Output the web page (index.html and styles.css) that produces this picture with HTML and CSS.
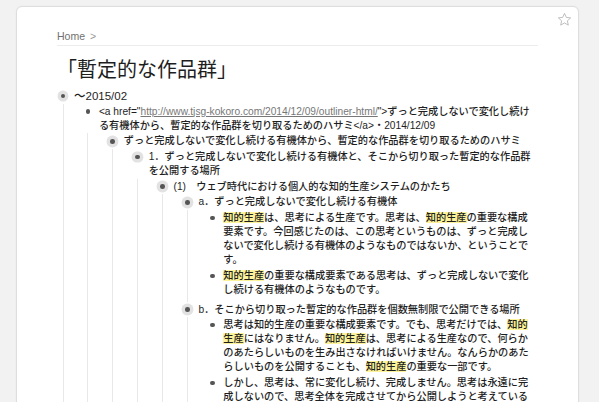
FILE: index.html
```html
<!DOCTYPE html>
<html lang="ja">
<head>
<meta charset="utf-8">
<title>「暫定的な作品群」</title>
<link rel="stylesheet" href="styles.css">
</head>
<body>
<div class="card">
  <svg class="star" viewBox="0 0 24 24" width="15" height="15"><polygon points="12,2.2 14.9,8.6 21.8,9.4 16.6,14.1 18.1,21 12,17.5 5.9,21 7.4,14.1 2.2,9.4 9.1,8.6"/></svg>
  <div class="crumbs">Home <span class="sep">&gt;</span></div>
  <h1 class="title">「暫定的な作品群」</h1>
  <div class="tree">
    <div class="item top">
      <div class="row"><span class="bul open"></span><span class="txt">～2015/02</span></div>
      <div class="kids">
        <div class="item">
          <div class="row"><span class="bul"></span><span class="txt">&lt;a href="<span class="url">http://www.tjsg-kokoro.com/2014/12/09/outliner-html/</span>"&gt;ずっと完成しないで変化し続け<br>る有機体から、暫定的な作品群を切り取るためのハサミ&lt;/a&gt;・2014/12/09</span></div>
          <div class="kids">
            <div class="item">
              <div class="row"><span class="bul open"></span><span class="txt">ずっと完成しないで変化し続ける有機体から、暫定的な作品群を切り取るためのハサミ</span></div>
              <div class="kids">
                <div class="item">
                  <div class="row"><span class="bul open"></span><span class="txt">1．ずっと完成しないで変化し続ける有機体と、そこから切り取った暫定的な作品群<br>を公開する場所</span></div>
                  <div class="kids">
                    <div class="item">
                      <div class="row"><span class="bul open"></span><span class="txt">(1)　ウェブ時代における個人的な知的生産システムのかたち</span></div>
                      <div class="kids">
                        <div class="item">
                          <div class="row"><span class="bul open"></span><span class="txt">a．ずっと完成しないで変化し続ける有機体</span></div>
                          <div class="kids end">
                            <div class="item">
                              <div class="row"><span class="bul"></span><span class="txt"><span class="hl">知的生産</span>は、思考による生産です。思考は、<span class="hl">知的生産</span>の重要な構成<br>要素です。今回感じたのは、この思考というものは、ずっと完成し<br>ないで変化し続ける有機体のようなものではないか、ということで<br>す。</span></div>
                            </div>
                            <div class="item">
                              <div class="row"><span class="bul"></span><span class="txt"><span class="hl">知的生産</span>の重要な構成要素である思考は、ずっと完成しないで変化<br>し続ける有機体のようなものです。</span></div>
                            </div>
                          </div>
                        </div>
                        <div class="item">
                          <div class="row"><span class="bul open"></span><span class="txt">b．そこから切り取った暫定的な作品群を個数無制限で公開できる場所</span></div>
                          <div class="kids">
                            <div class="item">
                              <div class="row"><span class="bul"></span><span class="txt">思考は知的生産の重要な構成要素です。でも、思考だけでは、<span class="hl">知的<br>生産</span>にはなりません。<span class="hl">知的生産</span>は、思考による生産なので、何らか<br>のあたらしいものを生み出さなければいけません。なんらかのあた<br>らしいものを公開することも、<span class="hl">知的生産</span>の重要な一部です。</span></div>
                            </div>
                            <div class="item">
                              <div class="row"><span class="bul"></span><span class="txt">しかし、思考は、常に変化し続け、完成しません。思考は永遠に完<br>成しないので、思考全体を完成させてから公開しようと考えている<br>と、いつまでたっても公開することができません。</span></div>
                            </div>
                          </div>
                        </div>
                      </div>
                    </div>
                  </div>
                </div>
              </div>
            </div>
          </div>
        </div>
      </div>
    </div>
  </div>
</div>
</body>
</html>
```

FILE: styles.css
```css
html, body {
  margin: 0;
  padding: 0;
}

body {
  background: #f2f2f2;
  font-family: "Liberation Sans", "Noto Sans CJK JP", sans-serif;
  color: #1e1e1e;
  height: 402px;
  overflow: hidden;
}

.card {
  position: relative;
  box-sizing: border-box;
  width: 563px;
  min-height: 460px;
  margin: 6px 0 0 16px;
  padding: 0 40px;
  background: #fff;
  border: 1px solid #dedede;
  border-radius: 6px;
  box-shadow: 0 0 2px rgba(0, 0, 0, 0.05);
}

.star {
  position: absolute;
  top: 5px;
  right: 6px;
  fill: none;
  stroke: #b0b0b0;
  stroke-width: 1.3;
  stroke-linejoin: round;
}

.crumbs {
  padding: 22px 0 2px;
  font-size: 10.5px;
  line-height: 14px;
  color: #707070;
  border-bottom: 1px solid #ececec;
}

.crumbs .sep {
  margin-left: 2px;
  color: #999;
}

.title {
  margin: 11px 0 0;
  font-size: 20px;
  line-height: 26px;
  font-weight: normal;
  color: #1e1e1e;
}

.tree {
  margin: 5px 0 0 -5px;
  font-size: 10.2px;
  line-height: 14px;
  font-weight: 500;
}

.row {
  display: flex;
  padding: 1px 0 0.7px;
}

.top > .row .txt {
  font-size: 11.5px;
}

.bul {
  flex: none;
  width: 22px;
  height: 14px;
  display: flex;
  align-items: center;
  justify-content: center;
}

.bul::before {
  content: "";
  width: 4.6px;
  height: 4.6px;
  border-radius: 50%;
  background: #555;
}

.bul.open::before {
  box-shadow: 0 0 0 3.4px #e2e2e2;
}

.txt {
  flex: 1;
  min-width: 0;
  color: #1e1e1e;
}

.kids {
  margin-left: 10.5px;
  padding-left: 13.4px;
  border-left: 1px solid #e8e8e8;
}

.kids.end {
  padding-bottom: 4px;
}

.url {
  color: #777;
  text-decoration: underline;
}

.hl {
  background: #fcf39a;
}
```
